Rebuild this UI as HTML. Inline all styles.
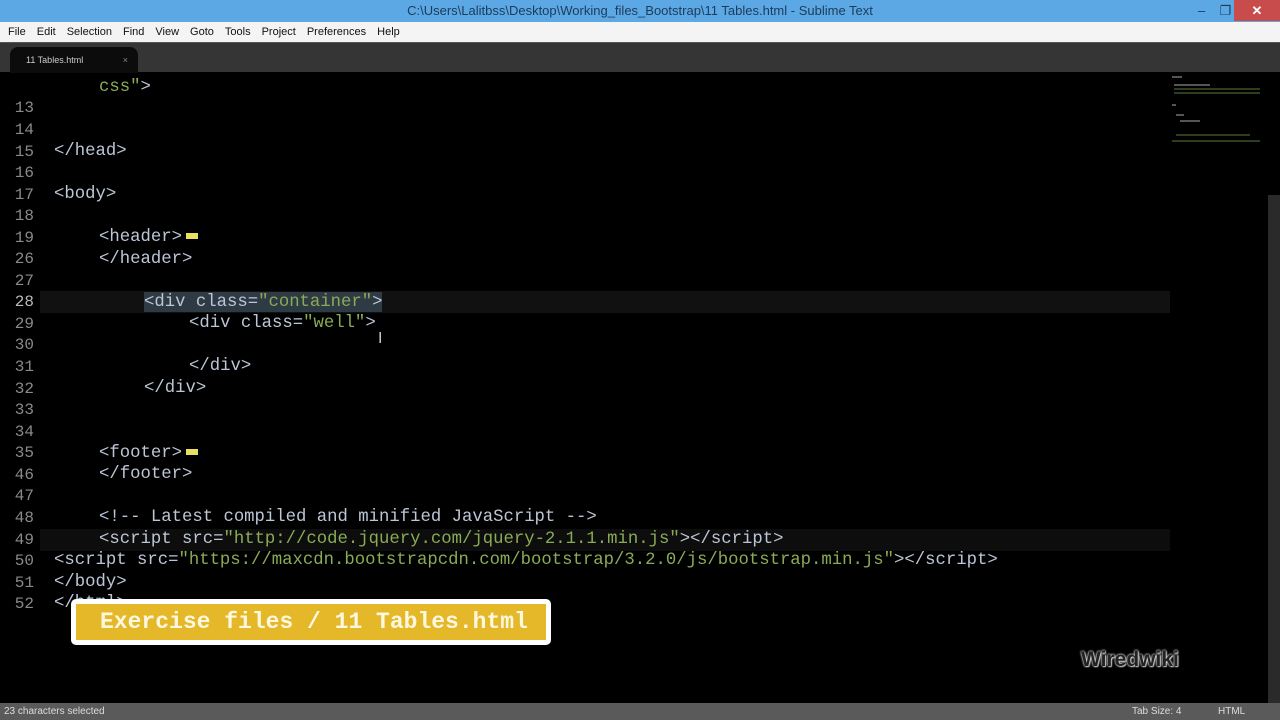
<!DOCTYPE html>
<html><head><meta charset="utf-8"><style>
*{margin:0;padding:0;box-sizing:border-box}
body{width:1280px;height:720px;overflow:hidden;background:#000;font-family:"Liberation Sans",sans-serif;position:relative}
#title{position:absolute;left:0;top:0;width:1280px;height:22px;background:#5ba8e4;color:#1d3b5a;font-size:13px;text-align:center;line-height:22px}
#close{position:absolute;right:0;top:0;width:46px;height:21px;background:#c94c4c;color:#fff;text-align:center;font-size:13px;line-height:21px;font-weight:bold}
#menu{position:absolute;top:22px;left:0;width:1280px;height:20px;background:#f4f4f4;font-size:11px;line-height:20px;color:#111}
#menu span{margin-left:8px;margin-right:3px}
#tabs{position:absolute;top:42px;left:0;width:1280px;height:30px;background:#353535;border-top:1px solid #555}
#tab{position:absolute;left:10px;top:4px;width:128px;height:26px;background:#0c0c0c;border-radius:8px 8px 0 0;color:#ccc;font-size:9px;line-height:26px;padding-left:16px}
#tab b{position:absolute;right:10px;font-weight:normal;color:#888}
.ln{position:absolute;left:0;width:34px;text-align:right;color:#8a8a8a;font-family:"Liberation Mono",monospace;font-size:16px;margin-top:2px}
.c{position:absolute;font-family:"Liberation Mono",monospace;font-size:17.3px;color:#bcc6d6;white-space:pre;margin-top:2px}
.s{color:#8aab55}
.f{display:inline-block;width:12px;height:6px;background:#e8e060;vertical-align:middle;margin-left:4px}
#status{position:absolute;left:0;top:703px;width:1280px;height:17px;background:#5a5a5a;color:#ddd;font-size:10px;line-height:17px;padding-left:4px}
#banner{position:absolute;left:71px;top:599px;width:480px;height:46px;background:#fff;border-radius:5px}
#banner div{position:absolute;left:5px;top:5px;right:5px;bottom:5px;background:#e5b82a;color:#fff8e0;font-family:"Liberation Mono",monospace;font-weight:bold;font-size:23px;line-height:36px;padding-left:24px}
#wm{position:absolute;left:1081px;top:648px;color:#222;font-weight:bold;font-size:21px;text-shadow:0 0 2px #ddd,0 0 2px #ddd,1px 1px 1px #aaa}
#mini{position:absolute;left:1268px;top:195px;width:12px;height:508px;background:#2a2a2a}
#mm{position:absolute;left:1170px;top:75px;width:90px;height:70px}
</style></head><body>
<div id="title">C:\Users\Lalitbss\Desktop\Working_files_Bootstrap\11 Tables.html - Sublime Text<span style="position:absolute;left:1198px;top:0">–&nbsp;&nbsp;&nbsp;&nbsp;❐</span><div id="close">✕</div></div>
<div id="menu"><span>File</span><span>Edit</span><span>Selection</span><span>Find</span><span>View</span><span>Goto</span><span>Tools</span><span>Project</span><span>Preferences</span><span>Help</span></div>
<div id="tabs"><div id="tab">11 Tables.html<b>×</b></div></div>
<svg id="mm" viewBox="0 0 90 70"><g stroke="#aaa" stroke-width="1"><line x1="2" y1="2" x2="12" y2="2"/><line x1="4" y1="10" x2="40" y2="10"/><line x1="4" y1="14" x2="90" y2="14" stroke="#5a7a3a"/><line x1="4" y1="18" x2="90" y2="18" stroke="#5a7a3a"/><line x1="2" y1="30" x2="6" y2="30"/><line x1="6" y1="40" x2="14" y2="40"/><line x1="10" y1="46" x2="30" y2="46"/><line x1="6" y1="60" x2="80" y2="60" stroke="#5a7a3a"/><line x1="2" y1="66" x2="90" y2="66" stroke="#5a7a3a"/></g></svg>
<div id="mini"></div>
<div style="position:absolute;left:40px;top:291px;width:1130px;height:22px;background:#111"></div>
<div style="position:absolute;left:144px;top:292px;width:238px;height:20px;background:#2e3a44"></div>
<div style="position:absolute;left:40px;top:529px;width:1130px;height:22px;background:#0d0d0d"></div>

<div class="c" style="left:99px;top:76px"><span class="s">css"</span>&gt;</div>
<div class="ln" style="top:97px">13</div>
<div class="ln" style="top:119px">14</div>
<div class="ln" style="top:141px">15</div><div class="c" style="left:54px;top:140px">&lt;/head&gt;</div>
<div class="ln" style="top:162px">16</div>
<div class="ln" style="top:184px">17</div><div class="c" style="left:54px;top:183px">&lt;body&gt;</div>
<div class="ln" style="top:205px">18</div>
<div class="ln" style="top:227px">19</div><div class="c" style="left:99px;top:226px">&lt;header&gt;<span class="f"></span></div>
<div class="ln" style="top:248px">26</div><div class="c" style="left:99px;top:248px">&lt;/header&gt;</div>
<div class="ln" style="top:270px">27</div>
<div class="ln" style="top:291px;color:#bbb">28</div><div class="c" style="left:144px;top:291px">&lt;div class=<span class="s">"container"</span>&gt;</div>
<div class="ln" style="top:313px">29</div><div class="c" style="left:189px;top:312px">&lt;div class=<span class="s">"well"</span>&gt;</div>
<div class="ln" style="top:334px">30</div>
<div class="ln" style="top:356px">31</div><div class="c" style="left:189px;top:355px">&lt;/div&gt;</div>
<div class="ln" style="top:378px">32</div><div class="c" style="left:144px;top:377px">&lt;/div&gt;</div>
<div class="ln" style="top:399px">33</div>
<div class="ln" style="top:421px">34</div>
<div class="ln" style="top:442px">35</div><div class="c" style="left:99px;top:442px">&lt;footer&gt;<span class="f"></span></div>
<div class="ln" style="top:464px">46</div><div class="c" style="left:99px;top:463px">&lt;/footer&gt;</div>
<div class="ln" style="top:485px">47</div>
<div class="ln" style="top:507px">48</div><div class="c" style="left:99px;top:506px">&lt;!-- Latest compiled and minified JavaScript --&gt;</div>
<div class="ln" style="top:529px">49</div><div class="c" style="left:99px;top:528px">&lt;script src=<span class="s">"http://code.jquery.com/jquery-2.1.1.min.js"</span>&gt;&lt;/script&gt;</div>
<div class="ln" style="top:550px">50</div><div class="c" style="left:54px;top:549px">&lt;script src=<span class="s">"https://maxcdn.bootstrapcdn.com/bootstrap/3.2.0/js/bootstrap.min.js"</span>&gt;&lt;/script&gt;</div>
<div class="ln" style="top:572px">51</div><div class="c" style="left:54px;top:571px">&lt;/body&gt;</div>
<div class="ln" style="top:593px">52</div><div class="c" style="left:54px;top:592px">&lt;/html&gt;</div>
<div style="position:absolute;left:378px;top:330px;color:#ccc;font-size:16px">I</div>
<div id="banner"><div>Exercise files / 11 Tables.html</div></div>
<div id="wm">Wiredwiki</div>
<div id="status">23 characters selected<span style="position:absolute;left:1132px">Tab Size: 4</span><span style="position:absolute;left:1218px">HTML</span></div>
</body></html>
